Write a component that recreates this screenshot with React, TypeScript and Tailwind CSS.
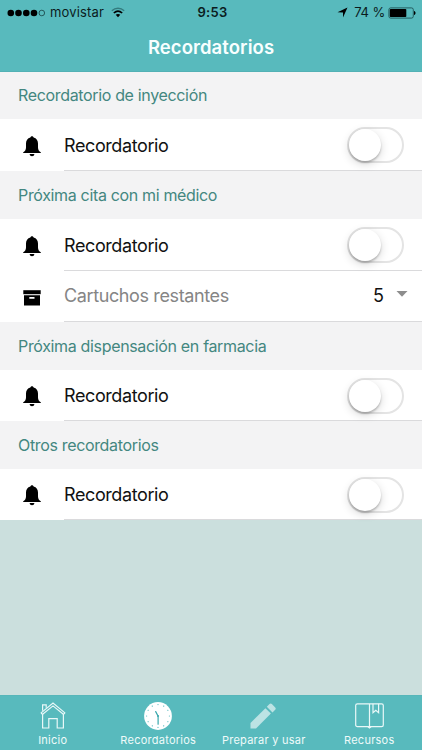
import type { ReactNode } from "react"

interface ReminderSection {
  title: string
  headerClass: string
  rowClass: string
  cartridges?: number
}

const sections: ReminderSection[] = [
  { title: "Recordatorio de inyección", headerClass: "h-[47px]", rowClass: "h-[52px]" },
  { title: "Próxima cita con mi médico", headerClass: "h-12", rowClass: "h-[52px]", cartridges: 5 },
  { title: "Próxima dispensación en farmacia", headerClass: "h-12", rowClass: "h-[51px]" },
  { title: "Otros recordatorios", headerClass: "h-12", rowClass: "h-[51px]" },
]

function BellIcon() {
  return (
    <svg width="18" height="21" viewBox="0 0 18 21" className="block">
      <path d="M9 0.2c0.9 0 1.5 0.6 1.6 1.4C13.5 2.3 15 4.7 15 7.6v4c0 2.3 1.1 3.9 2.8 4.7v0.8H0.2v-0.8C1.9 15.5 3 13.9 3 11.6v-4c0-2.9 1.5-5.3 4.4-6C7.5 0.8 8.1 0.2 9 0.2z" />
      <path d="M6.6 18.1h4.8c-0.2 1.4-1.1 2.2-2.4 2.2s-2.2-0.8-2.4-2.2z" />
    </svg>
  )
}

function BoxIcon() {
  return (
    <svg width="18" height="16" viewBox="0 0 18 16" className="block">
      <path d="M0.3 0.2h17.4v4H0.3z" />
      <path fillRule="evenodd" d="M1 5.2h16v10.4H1zM6.3 7v1.7h5.2V7z" />
    </svg>
  )
}

function HouseIcon() {
  return (
    <svg width="26" height="27" viewBox="0 0 26 27" fill="none" stroke="#e9f8f8" strokeWidth="1.2" className="block">
      <path d="M0.8 11.1L13 1.1l12.2 10M2.6 12.3L13 3.9l10.4 8.4M0.8 11.1l1.8 1.2M25.2 11.1l-1.8 1.2" />
      <path d="M2.6 8.8V2.8h3.6v3" />
      <path d="M2.6 12v14h6.2v-9.4h8.4V26h6.2V12" />
    </svg>
  )
}

function ClockIcon() {
  const ticks = Array.from({ length: 12 }, (_, i) => i * 30)
  return (
    <svg width="28" height="28" viewBox="0 0 28 28" className="block">
      <circle cx="14" cy="14" r="13.9" fill="#fff" />
      {ticks.map((angle) => (
        <circle key={angle} cx="14" cy="2.6" r="0.6" fill="#56b9bd" transform={`rotate(${angle} 14 14)`} />
      ))}
      <path d="M14.1 14v8.2M14 14l-2.3-4.4" fill="none" stroke="#3aa8ad" strokeWidth="1.2" strokeLinecap="round" />
      <circle cx="14" cy="14" r="1" fill="#3aa8ad" />
    </svg>
  )
}

function PencilIcon() {
  return (
    <svg width="27" height="26" viewBox="0 0 27 26" fill="#bce3e4" className="block">
      <path d="M0.5 25.5v-5.4L15.4 5.2l5.5 5.4L6 25.5z" />
      <path d="M16.8 3.8l2.7-2.7c0.7-0.7 1.7-0.7 2.4 0l3.3 3.3c0.7 0.7 0.7 1.7 0 2.4l-2.7 2.6z" />
    </svg>
  )
}

function BookIcon() {
  return (
    <svg width="29" height="26" viewBox="0 0 29 26" fill="none" stroke="#e9f8f8" strokeWidth="1.2" className="block">
      <rect x="0.7" y="0.8" width="27.6" height="22.8" rx="1.7" />
      <path d="M14.5 1v24.5M13 23.7l1.5 1.2 1.5-1.2" />
      <path d="M18 0.8v8.9l2.8-2.5 2.8 2.5V0.8" />
    </svg>
  )
}

function StatusBar() {
  return (
    <div className="grid h-6 grid-cols-3 items-center pt-px text-[13px] text-[#0b1c1d]">
      <div className="flex items-center pl-[7px]">
        <svg width="38" height="8" viewBox="0 0 38 8" className="block">
          {[3.8, 11.5, 19.3, 27].map((cx) => (
            <circle key={cx} cx={cx} cy="4" r="3.3" fill="#000" />
          ))}
          <circle cx="34.8" cy="4" r="2.8" fill="none" stroke="#163f41" strokeWidth="0.8" />
        </svg>
        <span className="ml-[5px] tracking-[0.17px]">movistar</span>
        <svg width="14" height="11" viewBox="0 0 14 11" fill="none" className="ml-[7px] block">
          <path d="M0.8 3.7C4.4 0.4 9.6 0.4 13.2 3.7" stroke="#337b7e" strokeWidth="1.3" />
          <path d="M2.8 6C5.3 3.8 8.7 3.8 11.2 6" stroke="#000" strokeWidth="1.6" />
          <path d="M7 10.3L4.7 7.8c1.3-1.1 3.3-1.1 4.6 0z" fill="#000" />
        </svg>
      </div>
      <span className="pl-[3px] text-center text-[13px] font-semibold tracking-[0.3px]">9:53</span>
      <div className="flex items-center justify-end pr-[6px]">
        <svg width="11" height="11" viewBox="0 0 11 11" className="mr-[6px] block">
          <path d="M10.5 0.5L6 10.5V5.6L0.5 5.2z" fill="#000" />
        </svg>
        <span className="mr-[3px] whitespace-nowrap tracking-[-0.15px]">74 %</span>
        <svg width="28" height="12" viewBox="0 0 28 12" className="block">
          <rect x="0.9" y="0.9" width="24.4" height="10.2" rx="1.8" fill="none" stroke="#174548" strokeWidth="0.8" />
          <rect x="1.8" y="1.9" width="16.5" height="8.2" rx="0.8" />
          <path d="M26 4c2 0.6 2 3.4 0 4z" />
        </svg>
      </div>
    </div>
  )
}

function Toggle() {
  return (
    <button
      type="button"
      role="switch"
      aria-checked="false"
      aria-label="Recordatorio"
      className="mt-px flex h-9 w-[57px] items-center rounded-full border-2 border-[#e4e4e4] bg-white"
    >
      <span className="size-8 rounded-full bg-white shadow-[0_2px_2px_rgba(0,0,0,0.2),0_3px_10px_rgba(0,0,0,0.16)]" />
    </button>
  )
}

function Row({ icon, heightClass, children }: { icon: ReactNode; heightClass: string; children: ReactNode }) {
  return (
    <div className={`flex bg-white ${heightClass}`}>
      <div className="flex w-16 shrink-0 items-center justify-center pt-0.5">{icon}</div>
      <div className="flex flex-1 items-center justify-between border-b border-[#dadadc] pr-[18px]">{children}</div>
    </div>
  )
}

function Tab({ icon, label }: { icon: ReactNode; label: string }) {
  return (
    <div className="flex flex-1 flex-col items-center">
      <div className="flex h-9 items-center pt-[3px]">{icon}</div>
      <span className="whitespace-nowrap text-[11px] leading-4 tracking-[0.25px] text-[#effafa]">{label}</span>
    </div>
  )
}

export default function App() {
  return (
    <div className="flex h-[750px] w-[422px] flex-col overflow-hidden bg-[#cbdfdd] font-['Inter','Liberation_Sans',sans-serif]">
      <header className="h-[72px] border-b border-[#53b1b5] bg-[#58babd]">
        <StatusBar />
        <h1 className="flex h-12 items-center justify-center text-[18.5px] font-semibold tracking-[0.07px] text-[#f8ffff]">
          Recordatorios
        </h1>
      </header>

      <main className="flex-1">
        {sections.map((section) => (
          <section key={section.title}>
            <h2
              className={`flex items-center bg-[#f3f3f4] pb-px pl-[18px] text-[16px] tracking-[-0.34px] text-[#438780] ${section.headerClass}`}
            >
              {section.title}
            </h2>
            <Row icon={<BellIcon />} heightClass={section.rowClass}>
              <span className="pt-px text-[18px] tracking-[-0.4px] text-[#111]">Recordatorio</span>
              <Toggle />
            </Row>
            {section.cartridges !== undefined && (
              <Row icon={<BoxIcon />} heightClass="h-[51px]">
                <span className="pb-px text-[18px] tracking-[-0.38px] text-[#858585]">Cartuchos restantes</span>
                <span className="flex items-center pb-px text-[18px] text-[#111]">
                  {section.cartridges}
                  <svg width="12" height="6" viewBox="0 0 12 6" className="-mr-1 mb-[3px] ml-3 block">
                    <path d="M0.5 0h11L6 5.8z" fill="#8d8d8d" />
                  </svg>
                </span>
              </Row>
            )}
          </section>
        ))}
      </main>

      <nav className="flex h-[55px] border-t border-[#56b6b9] bg-[#58babd]">
        <Tab icon={<HouseIcon />} label="Inicio" />
        <Tab icon={<ClockIcon />} label="Recordatorios" />
        <Tab icon={<PencilIcon />} label="Preparar y usar" />
        <Tab icon={<BookIcon />} label="Recursos" />
      </nav>
    </div>
  )
}
